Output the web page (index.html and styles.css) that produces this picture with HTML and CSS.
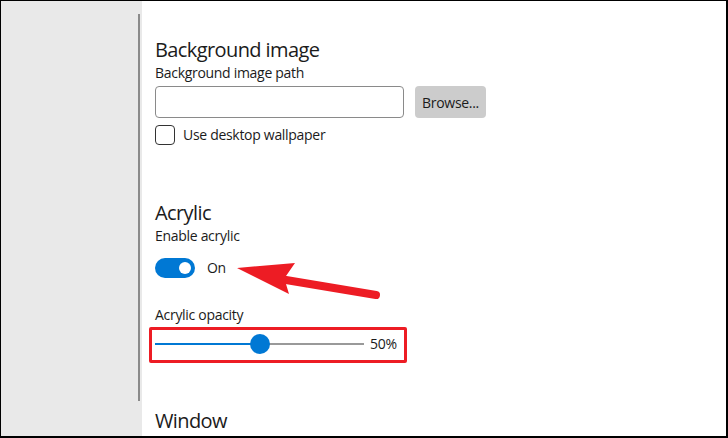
FILE: index.html
```html
<!DOCTYPE html>
<html lang="en">
<head>
  <meta charset="UTF-8" />
  <title>Settings</title>
  <link rel="stylesheet" href="styles.css">
</head>
<body>
  <div class="frame">
    <aside class="sidebar">
      <div class="scrollbar"></div>
    </aside>

    <main class="content">
      <!-- Background image -->
      <section class="group">
        <h2 class="group-title">Background image</h2>
        <div class="field-label">Background image path</div>
        <div class="path-row">
          <input type="text" class="text-input" />
          <button type="button" class="browse-button">Browse...</button>
        </div>
        <label class="check-row">
          <span class="checkbox"></span>
          <span>Use desktop wallpaper</span>
        </label>
      </section>

      <!-- Acrylic -->
      <section class="group group-acrylic">
        <h2 class="group-title">Acrylic</h2>
        <div class="field-label">Enable acrylic</div>
        <div class="toggle-row">
          <span class="toggle"><span class="toggle-knob"></span></span>
          <span>On</span>
        </div>
        <div class="field-label opacity-label">Acrylic opacity</div>
        <div class="highlight-box">
          <div class="slider">
            <div class="slider-fill"></div>
            <div class="slider-thumb"></div>
            <div class="slider-rest"></div>
          </div>
          <span class="slider-value">50%</span>
        </div>
      </section>

      <section class="group group-window">
        <h2 class="group-title">Window</h2>
      </section>
    </main>

    <svg class="arrow" width="155" height="50" viewBox="0 0 155 50">
      <line x1="56" y1="25" x2="146" y2="40" stroke="#ed1c24" stroke-width="8" stroke-linecap="round" />
      <polygon points="7,13 65,8 56,21 56,29 59,39" fill="#ed1c24" />
    </svg>
  </div>
</body>
</html>
```

FILE: styles.css
```css
:root {
  --accent: #0078d4;
  --text: #1b1b1b;
  --sidebar-bg: #e9e9e9;
  --annotation: #ed1c24;
  --font: "Open Sans", "Noto Sans", sans-serif;
}

body {
  margin: 0;
  font-family: var(--font);
  color: var(--text);
  background: #fff;
  letter-spacing: -0.3px;
}

.frame {
  position: relative;
  display: flex;
  width: 728px;
  height: 438px;
  box-sizing: border-box;
  border-style: solid;
  border-color: #000;
  border-width: 1px 2px 2px 1px;
  overflow: hidden;
}

.sidebar {
  width: 141px;
  flex-shrink: 0;
  background-color: var(--sidebar-bg);
  display: flex;
  justify-content: flex-end;
  padding: 13px 2px 35px 0;
  box-sizing: border-box;
}

.scrollbar {
  width: 2px;
  background-color: #8a8a8a;
}

.content {
  flex: 1;
  padding-left: 13px;
  background: #fff;
}

.group-title {
  margin: 36px 0 0;
  font-size: 20px;
  font-weight: normal;
  line-height: 26px;
  letter-spacing: -0.6px;
}

.field-label {
  font-size: 14px;
  line-height: 20px;
}

.path-row {
  display: flex;
  gap: 11px;
  margin-top: 3px;
}

.text-input {
  width: 249px;
  height: 32px;
  box-sizing: border-box;
  border: 1px solid #8a8a8a;
  border-radius: 4px;
  background: #fff;
  font-family: var(--font);
  font-size: 14px;
}

.browse-button {
  width: 71px;
  height: 32px;
  border: none;
  border-radius: 4px;
  background-color: #cccccc;
  color: var(--text);
  font-family: var(--font);
  font-size: 14px;
  letter-spacing: -0.3px;
  white-space: nowrap;
  padding: 0;
}

.check-row {
  display: flex;
  align-items: center;
  gap: 8px;
  margin-top: 7px;
  font-size: 14px;
  line-height: 20px;
}

.checkbox {
  width: 20px;
  height: 20px;
  box-sizing: border-box;
  border: 1px solid #333;
  border-radius: 4px;
}

.group-acrylic .group-title {
  margin-top: 55px;
}

.toggle-row {
  display: flex;
  align-items: center;
  gap: 12px;
  margin-top: 12px;
  font-size: 14px;
  line-height: 20px;
}

.toggle {
  width: 40px;
  height: 20px;
  border-radius: 10px;
  background-color: var(--accent);
  display: flex;
  align-items: center;
  justify-content: flex-end;
  padding-right: 4px;
  box-sizing: border-box;
}

.toggle-knob {
  width: 12px;
  height: 12px;
  border-radius: 50%;
  background: #fff;
}

.opacity-label {
  margin-top: 27px;
}

.highlight-box {
  display: flex;
  align-items: center;
  gap: 6px;
  width: 258px;
  height: 36px;
  box-sizing: border-box;
  margin: 2px 0 0 -6px;
  padding: 0 0 3px 3px;
  border: 3px solid var(--annotation);
  border-radius: 2px;
  font-size: 14px;
}

.slider {
  width: 209px;
  display: flex;
  align-items: center;
}

.slider-fill {
  flex: 1;
  height: 2px;
  margin-right: -10px;
  background-color: var(--accent);
}

.slider-rest {
  flex: 1;
  height: 2px;
  margin-left: -10px;
  background-color: #999;
}

.slider-thumb {
  width: 20px;
  height: 20px;
  border-radius: 50%;
  background-color: var(--accent);
  position: relative;
  z-index: 1;
}

.group-window .group-title {
  margin-top: 45px;
}

.arrow {
  position: absolute;
  left: 229px;
  top: 254px;
  pointer-events: none;
}
```
